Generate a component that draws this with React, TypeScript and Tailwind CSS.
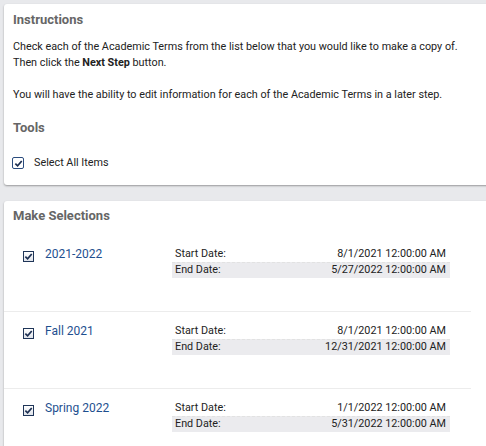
import React from "react";

interface Term {
  name: string;
  start: string;
  end: string;
}

const terms: Term[] = [
  { name: "2021-2022", start: "8/1/2021 12:00:00 AM", end: "5/27/2022 12:00:00 AM" },
  { name: "Fall 2021", start: "8/1/2021 12:00:00 AM", end: "12/31/2021 12:00:00 AM" },
  { name: "Spring 2022", start: "1/1/2022 12:00:00 AM", end: "5/31/2022 12:00:00 AM" },
];

// small checked box, drawn like the old native one
const CheckBox: React.FC<{ rounded?: boolean }> = ({ rounded }) => (
  <span
    className={
      rounded
        ? "flex h-[12px] w-[12px] shrink-0 items-center justify-center rounded-[2px] border border-[#2b4c7e] bg-white"
        : "flex h-[11px] w-[11px] shrink-0 items-center justify-center border border-[#1f3558] bg-gradient-to-b from-white to-[#dfe3ea]"
    }
  >
    <svg viewBox="0 0 10 10" className="h-[9px] w-[9px]">
      <path d="M1.5 5.2 L4 7.6 L8.6 2.2" fill="none" stroke="#1c2f52" strokeWidth="1.9" />
    </svg>
  </span>
);

const App: React.FC = () => {
  return (
    <div
      className="h-[446px] w-[486px] overflow-hidden bg-[#e8e9ec] pl-[4px] pt-[4px] text-[#222]"
      style={{ fontFamily: "Roboto, 'Liberation Sans', sans-serif" }}
    >
      {/* Instructions card */}
      <div className="w-[500px] rounded-[3px] bg-white px-[9px] pt-[8px] pb-[14px] shadow-[0_1px_2px_rgba(0,0,0,0.35)]">
        <h2 className="text-[13px] leading-[16px] font-bold text-[#666]">Instructions</h2>
        <p className="mt-[11px] text-[10.8px] leading-[16px]">
          Check each of the Academic Terms from the list below that you would like to make a copy of.
          <br />
          Then click the <b>Next Step</b> button.
        </p>
        <p className="mt-[16px] text-[10.8px] leading-[16px]">
          You will have the ability to edit information for each of the Academic Terms in a later step.
        </p>
        <h2 className="mt-[17px] text-[13px] leading-[16px] font-bold text-[#666]">Tools</h2>
        <div className="mt-[19px] -ml-px flex h-[16px] items-center gap-[10px]">
          <CheckBox rounded />
          <span className="text-[10.8px] leading-[16px]">Select All Items</span>
        </div>
      </div>

      {/* Make Selections card */}
      <div className="mt-[16px] w-[500px] rounded-[3px] bg-white pt-[7px] shadow-[0_1px_2px_rgba(0,0,0,0.35)]">
        <h2 className="px-[9px] text-[13px] leading-[16px] font-bold text-[#666]">Make Selections</h2>
        <div className="mt-[11px] w-[467px]">
          {terms.map((t) => (
            <div key={t.name} className="flex h-[77px] border-b border-[#ececec] pt-[11px]">
              <div className="flex w-[168px] items-start pl-[19px]">
                <div className="mt-[5px]">
                  <CheckBox />
                </div>
                <a className="ml-[11px] text-[12px] leading-[16px] text-[#1e4f8f]">{t.name}</a>
              </div>
              <div className="w-[278px] text-[10.8px] leading-[16px]">
                <div className="flex h-[16px] justify-between px-[3px] pr-[4px]">
                  <span>Start Date:</span>
                  <span>{t.start}</span>
                </div>
                <div className="flex h-[16px] justify-between border-t border-dashed border-[#e2e2e2] bg-[#ebebee] px-[3px] pr-[4px]">
                  <span className="-mt-px">End Date:</span>
                  <span className="-mt-px">{t.end}</span>
                </div>
              </div>
            </div>
          ))}
        </div>
      </div>
    </div>
  );
};

export default App;
